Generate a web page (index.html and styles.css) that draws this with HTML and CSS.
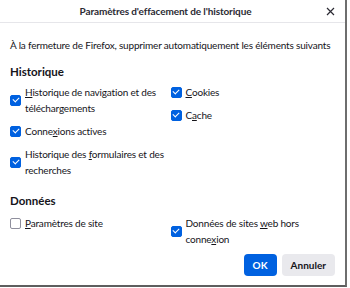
FILE: index.html
```html
<!DOCTYPE html>
<html lang="fr">

<head>
    <meta charset="UTF-8">
    <meta name="viewport" content="width=device-width, initial-scale=1.0">
    <title>Paramètres d'effacement de l'historique</title>
    <link rel="stylesheet" href="styles.css">
</head>

<body>
    <div class="dialog">
        <div class="header">
            <span class="title">Paramètres d'effacement de l'historique</span>
            <span class="close">
                <svg width="9" height="9" viewBox="0 0 9 9">
                    <path d="M1 1L8 8M8 1L1 8" stroke="#2b2a33" stroke-width="1.2" />
                </svg>
            </span>
        </div>
        <div class="body">
            <p class="intro">À la fermeture de Firefox, supprimer automatiquement les éléments suivants</p>

            <h2>Historique</h2>
            <div class="cols">
                <div class="col">
                    <label class="item"><span class="box on"></span><span><u>H</u>istorique de navigation et des téléchargements</span></label>
                    <label class="item"><span class="box on"></span><span>Conne<u>x</u>ions actives</span></label>
                    <label class="item"><span class="box on"></span><span>Historique des <u>f</u>ormulaires et des recherches</span></label>
                </div>
                <div class="col">
                    <label class="item"><span class="box on"></span><span><u>C</u>ookies</span></label>
                    <label class="item"><span class="box on"></span><span>C<u>a</u>che</span></label>
                </div>
            </div>

            <h2>Données</h2>
            <div class="cols data">
                <div class="col">
                    <label class="item"><span class="box"></span><span><u>P</u>aramètres de site</span></label>
                </div>
                <div class="col">
                    <label class="item"><span class="box on"></span><span>Données de sites <u>w</u>eb hors conne<u>x</u>ion</span></label>
                </div>
            </div>

            <div class="footer">
                <button class="btn primary">OK</button>
                <button class="btn">Annuler</button>
            </div>
        </div>
    </div>
</body>

</html>
```

FILE: styles.css
```css
* {
    margin: 0;
    padding: 0;
    box-sizing: border-box;
}

body {
    width: 350px;
    height: 288px;
    background-color: #ffffff;
    font-family: Lato, sans-serif;
    font-size: 10px;
    letter-spacing: -0.18px;
    color: #15141a;
}

.dialog {
    width: 347px;
    height: 287px;
    background-color: #ffffff;
    border-right: 2px solid #6e6e6e;
    border-bottom: 2px solid #5e5e5e;
    display: flex;
    flex-direction: column;
}

.header {
    height: 23px;
    padding-right: 14px;
    border-bottom: 1px solid #e6e6ea;
    display: flex;
    align-items: center;
    justify-content: center;
    position: relative;
}

.title {
    font-size: 10px;
    font-weight: 700;
    letter-spacing: -0.12px;
    color: #2b2a33;
}

.close {
    position: absolute;
    right: 10px;
    top: 7px;
    display: flex;
}

.body {
    padding: 0 10px;
    display: flex;
    flex-direction: column;
}

.intro {
    margin-top: 14px;
    line-height: 16px;
}

h2 {
    font-size: 11.5px;
    font-weight: 700;
    letter-spacing: 0;
    margin-top: 11px;
    line-height: 16px;
}

.cols {
    display: flex;
    margin-top: 4px;
}

.cols.data {
    margin-top: 6px;
}

.col {
    display: flex;
    flex-direction: column;
    gap: 7px;
}

.col:first-child {
    width: 161px;
}

.col:last-child {
    width: 165px;
}

.item {
    display: flex;
    align-items: center;
    gap: 4px;
    line-height: 16px;
}

.item u {
    text-underline-offset: 1px;
}

.box {
    flex: none;
    width: 11px;
    height: 11px;
    border: 1px solid #8f8f9d;
    border-radius: 2px;
    background-color: #ffffff;
    display: flex;
    align-items: center;
    justify-content: center;
}

.box.on {
    border-color: #0061e0;
    background-color: #0061e0;
}

.box.on::after {
    content: "";
    width: 5px;
    height: 3px;
    border-left: 1.5px solid #ffffff;
    border-bottom: 1.5px solid #ffffff;
    transform: translateY(-1px) rotate(-45deg);
}

h2+.cols+h2 {
    margin-top: 15px;
}

.footer {
    display: flex;
    justify-content: flex-end;
    gap: 5px;
    margin-top: 7px;
}

.btn {
    height: 22px;
    padding: 0 9px;
    border: none;
    border-radius: 4px;
    background-color: #e9e9ed;
    font-family: Lato, sans-serif;
    font-size: 10px;
    font-weight: 700;
    color: #15141a;
}

.btn.primary {
    width: 33px;
    background-color: #0061e0;
    color: #ffffff;
}
```
